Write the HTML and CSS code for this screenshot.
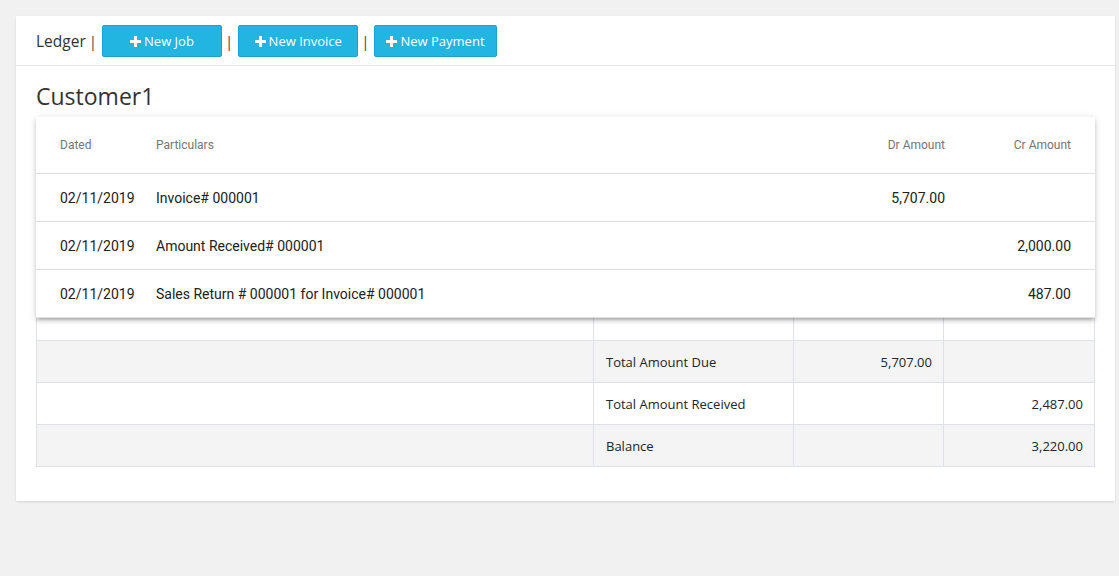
FILE: index.html
```html
<!DOCTYPE html>
<html lang="en">
<head>
  <meta charset="UTF-8">
  <meta name="viewport" content="width=device-width, initial-scale=1.0">
  <title>Ledger - Customer1</title>
  <link rel="stylesheet" href="styles.css">
</head>
<body>
  <div class="panel">
    <!-- toolbar with actions -->
    <div class="toolbar">
      <span class="title">Ledger</span>
      <span class="sep">|</span>
      <button class="btn"><svg class="plus" viewBox="0 0 11 11"><path d="M4 0h3v4h4v3H7v4H4V7H0V4h4z"/></svg>New Job</button>
      <span class="sep">|</span>
      <button class="btn"><svg class="plus" viewBox="0 0 11 11"><path d="M4 0h3v4h4v3H7v4H4V7H0V4h4z"/></svg>New Invoice</button>
      <span class="sep">|</span>
      <button class="btn"><svg class="plus" viewBox="0 0 11 11"><path d="M4 0h3v4h4v3H7v4H4V7H0V4h4z"/></svg>New Payment</button>
    </div>

    <div class="content">
      <h2>Customer1</h2>

      <!-- ledger entries -->
      <div class="card">
        <table class="entries">
          <colgroup>
            <col style="width: 120px">
            <col>
            <col style="width: 150px">
            <col style="width: 150px">
          </colgroup>
          <thead>
            <tr>
              <th>Dated</th>
              <th>Particulars</th>
              <th class="num">Dr Amount</th>
              <th class="num">Cr Amount</th>
            </tr>
          </thead>
          <tbody>
            <tr>
              <td>02/11/2019</td>
              <td>Invoice# 000001</td>
              <td class="num">5,707.00</td>
              <td class="num"></td>
            </tr>
            <tr>
              <td>02/11/2019</td>
              <td>Amount Received# 000001</td>
              <td class="num"></td>
              <td class="num">2,000.00</td>
            </tr>
            <tr>
              <td>02/11/2019</td>
              <td>Sales Return # 000001 for Invoice# 000001</td>
              <td class="num"></td>
              <td class="num">487.00</td>
            </tr>
          </tbody>
        </table>
      </div>

      <!-- totals -->
      <table class="totals">
        <colgroup>
          <col>
          <col style="width: 200px">
          <col style="width: 150px">
          <col style="width: 151px">
        </colgroup>
        <tr class="blank">
          <td></td><td></td><td></td><td></td>
        </tr>
        <tr class="odd">
          <td></td>
          <td>Total Amount Due</td>
          <td class="num">5,707.00</td>
          <td class="num"></td>
        </tr>
        <tr>
          <td></td>
          <td>Total Amount Received</td>
          <td class="num"></td>
          <td class="num">2,487.00</td>
        </tr>
        <tr class="odd">
          <td></td>
          <td>Balance</td>
          <td class="num"></td>
          <td class="num">3,220.00</td>
        </tr>
      </table>
    </div>
  </div>
</body>
</html>
```

FILE: styles.css
```css
body {
  margin: 0;
  padding: 16px 4px 16px 16px;
  background: #f1f1f1;
  font-family: "Open Sans", Arial, sans-serif;
  color: #212529;
}

.panel {
  background: #fff;
  box-shadow: 0 1px 2px rgba(0, 0, 0, 0.12);
}

.toolbar {
  display: flex;
  align-items: center;
  height: 49px;
  padding: 0 20px;
  border-bottom: 1px solid #e8e8e8;
}

.toolbar .title {
  font-size: 15.5px;
  color: #333;
}

.toolbar .sep {
  font-size: 15px;
  color: #444;
  margin: 0 5px 0 3px;
}

.btn {
  display: flex;
  align-items: center;
  justify-content: center;
  min-width: 120px;
  height: 32px;
  margin-top: 1px;
  padding: 0 11px;
  background: #22b5e2;
  border: 1px solid #1ba3cd;
  border-radius: 2px;
  color: #fff;
  font-family: inherit;
  font-size: 13px;
}

.btn .plus {
  width: 11px;
  height: 11px;
  fill: #fff;
  margin-right: 3px;
}

.content {
  padding: 0 20px 34px;
}

.content h2 {
  margin: 16px 0 6px;
  font-size: 23px;
  font-weight: 400;
  line-height: 29px;
  color: #333;
}

/* material-style card */
.card {
  position: relative;
  z-index: 1;
  background: #fff;
  box-shadow: 0 3px 3px -2px rgba(0, 0, 0, 0.2), 0 3px 4px 0 rgba(0, 0, 0, 0.14), 0 1px 8px 0 rgba(0, 0, 0, 0.12);
}

.entries {
  width: 100%;
  border-collapse: collapse;
  table-layout: fixed;
  font-family: Roboto, Arial, sans-serif;
}

.entries th,
.entries td {
  padding: 0;
  text-align: left;
  border-bottom: 1px solid #e0e0e0;
}

.entries th {
  height: 56px;
  font-size: 12px;
  font-weight: 400;
  color: #757575;
}

.entries td {
  height: 47px;
  font-size: 14px;
  color: #212121;
}

.entries th:first-child,
.entries td:first-child {
  padding-left: 24px;
}

.entries th:last-child,
.entries td:last-child {
  padding-right: 24px;
}

.entries .num {
  text-align: right;
}

/* totals table under the card */
.totals {
  width: 100%;
  margin-top: -20px;
  border-collapse: collapse;
  table-layout: fixed;
  font-size: 13px;
}

.totals td {
  height: 41px;
  padding: 0 12px;
  border: 1px solid #dee2e6;
}

.totals .odd td {
  background: #f4f4f4;
}

.totals .num {
  text-align: right;
  padding-right: 11px;
}
```
